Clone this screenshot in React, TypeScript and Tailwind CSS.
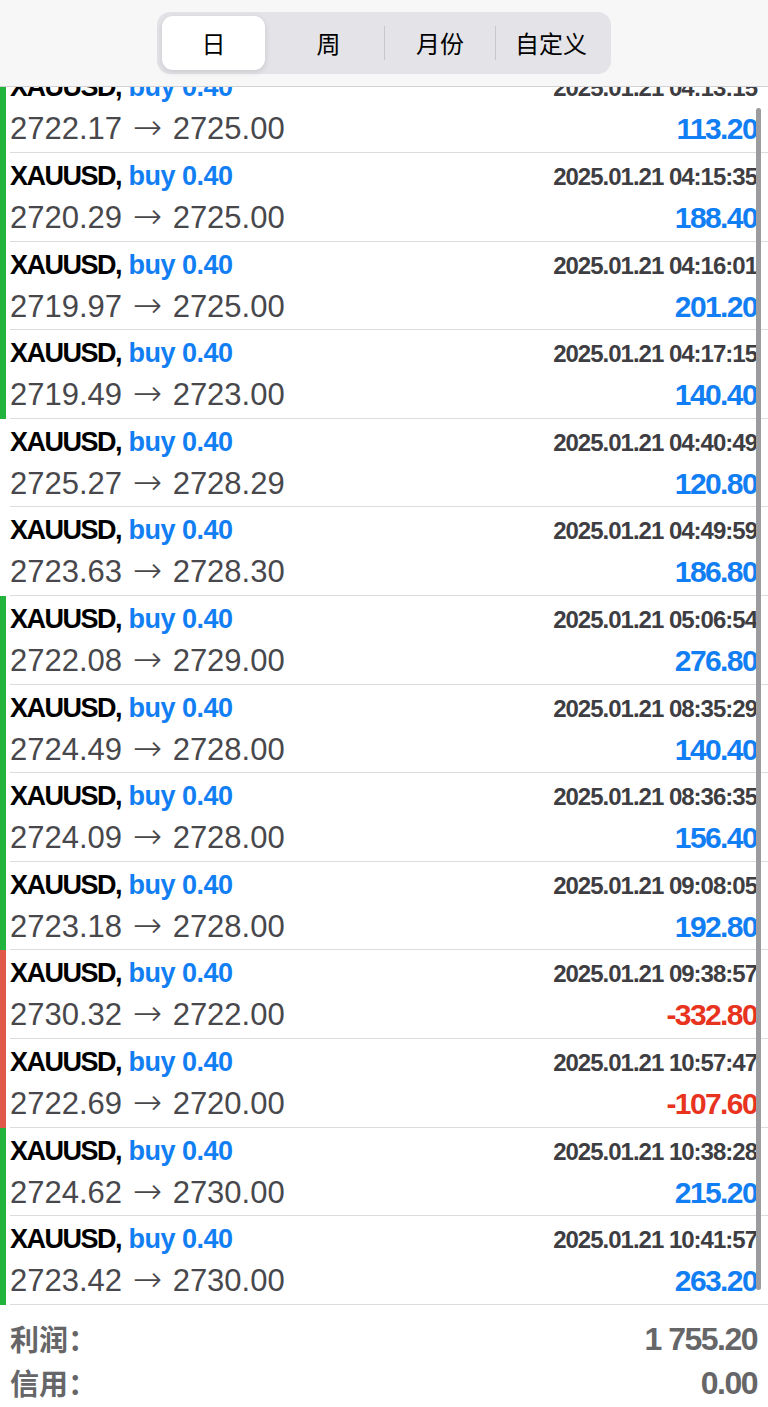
const trades = [
  { time: "04:13:15", open: "2722.17", close: "2725.00", profit: "113.20", bar: "green" },
  { time: "04:15:35", open: "2720.29", close: "2725.00", profit: "188.40", bar: "green" },
  { time: "04:16:01", open: "2719.97", close: "2725.00", profit: "201.20", bar: "green" },
  { time: "04:17:15", open: "2719.49", close: "2723.00", profit: "140.40", bar: "green" },
  { time: "04:40:49", open: "2725.27", close: "2728.29", profit: "120.80", bar: "none" },
  { time: "04:49:59", open: "2723.63", close: "2728.30", profit: "186.80", bar: "none" },
  { time: "05:06:54", open: "2722.08", close: "2729.00", profit: "276.80", bar: "green" },
  { time: "08:35:29", open: "2724.49", close: "2728.00", profit: "140.40", bar: "green" },
  { time: "08:36:35", open: "2724.09", close: "2728.00", profit: "156.40", bar: "green" },
  { time: "09:08:05", open: "2723.18", close: "2728.00", profit: "192.80", bar: "green" },
  { time: "09:38:57", open: "2730.32", close: "2722.00", profit: "-332.80", bar: "red" },
  { time: "10:57:47", open: "2722.69", close: "2720.00", profit: "-107.60", bar: "red" },
  { time: "10:38:28", open: "2724.62", close: "2730.00", profit: "215.20", bar: "green" },
  { time: "10:41:57", open: "2723.42", close: "2730.00", profit: "263.20", bar: "green" },
]

const tabs = ["日", "周", "月份", "自定义"]

function TradeRow({ t, first }: { t: (typeof trades)[number]; first: boolean }) {
  const barColor =
    t.bar === "green" ? "bg-[#22b43c]" : t.bar === "red" ? "bg-[#e0594b]" : "bg-transparent"
  const loss = t.profit.startsWith("-")
  return (
    <div className={`flex h-[88.6px] shrink-0 ${first ? "-mt-[22.6px]" : ""}`}>
      <div className={`w-[6px] ${barColor}`} />
      <div className="ml-[4px] flex-1 border-b border-[#dcdcdc] pr-[11px] pt-[6px]">
        <div className="flex h-[34px] items-baseline justify-between leading-[34px]">
          <div className="text-[27px] font-bold">
            <span className="tracking-[-1.5px] text-black">XAUUSD,</span>{" "}
            <span className="tracking-[-0.5px] text-[#127ef3]">buy 0.40</span>
          </div>
          <div className="text-[24px] font-bold tracking-[-1px] text-[#3d3d42]">
            2025.01.21 {t.time}
          </div>
        </div>
        <div className="mt-[5px] flex h-[36px] items-baseline justify-between leading-[36px]">
          <div className="text-[31px] text-[#48484c]">
            {t.open}{" "}
            <span className="mx-[2px] font-['DejaVu_Sans',sans-serif] text-[35px] font-extralight leading-[36px]">→</span>{" "}
            {t.close}
          </div>
          <div
            className={`text-[30px] font-bold tracking-[-1.6px] ${
              loss ? "text-[#e8341f]" : "text-[#127ef3]"
            }`}
          >
            {t.profit}
          </div>
        </div>
      </div>
    </div>
  )
}

export default function App() {
  return (
    <div className="relative flex h-[1407px] w-[768px] flex-col overflow-hidden bg-white font-['Liberation_Sans','Noto_Sans_CJK_SC',sans-serif]">
      {/* top segmented control */}
      <div className="flex h-[87px] shrink-0 items-center justify-center border-b border-[#d2d2d4] bg-[#f7f7f7]">
        <div className="flex h-[62px] w-[454px] items-center rounded-[13px] bg-[#e4e4e8] px-[5px]">
          {tabs.map((tab, i) => (
            <div key={tab} className="flex h-[54px] flex-1 items-center">
              {i >= 2 && <div className="h-[34px] w-px bg-[#c8c8cc]" />}
              {i === 0 ? (
                <div className="flex h-full w-[103px] items-center justify-center rounded-[11px] bg-white font-['Noto_Sans_CJK_SC',sans-serif] text-[24px] text-black shadow-[0_2px_6px_rgba(0,0,0,0.12)]">
                  {tab}
                </div>
              ) : (
                <div className="flex h-full flex-1 items-center justify-center font-['Noto_Sans_CJK_SC',sans-serif] text-[24px] text-black">
                  {tab}
                </div>
              )}
            </div>
          ))}
        </div>
      </div>

      {/* trade list */}
      <div className="flex h-[1218px] shrink-0 flex-col overflow-hidden">
        {trades.map((t, i) => (
          <TradeRow key={i} t={t} first={i === 0} />
        ))}
      </div>

      {/* totals */}
      <div className="ml-[10px] flex flex-col border-b border-[#d6d6d6] pb-[4px] pr-[11px] pt-[12px] text-[#666668]">
        <div className="flex h-[44px] items-center justify-between">
          <span className="font-['Noto_Sans_CJK_SC',sans-serif] text-[29px] font-bold">利润：</span>
          <span className="text-[32px] font-bold tracking-[-1.5px]">1 755.20</span>
        </div>
        <div className="flex h-[44px] items-center justify-between">
          <span className="font-['Noto_Sans_CJK_SC',sans-serif] text-[29px] font-bold">信用：</span>
          <span className="text-[32px] font-bold tracking-[-1.5px]">0.00</span>
        </div>
      </div>

      {/* scroll indicator */}
      <div className="absolute left-[756px] top-[108px] h-[1182px] w-[5px] rounded-full bg-[#9c9c9e]" />
    </div>
  )
}
